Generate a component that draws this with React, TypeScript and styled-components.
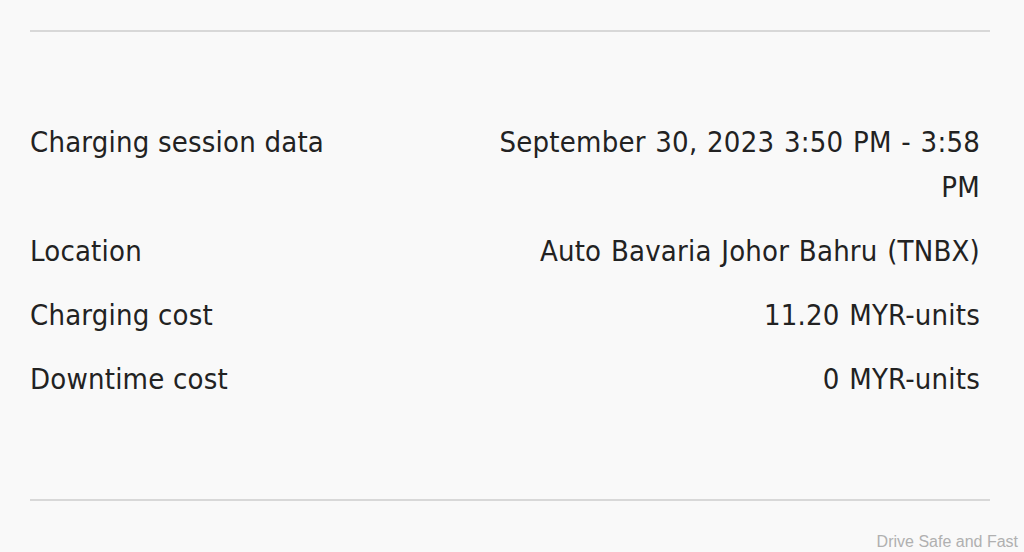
import React from "react";
import styled, { createGlobalStyle } from "styled-components";

const Global = createGlobalStyle`
  html, body { margin: 0; padding: 0; background: #f9f9f9; }
  body { width: 1024px; height: 552px; overflow: hidden; }
`;

const Page = styled.div`
  width: 1024px;
  height: 552px;
  box-sizing: border-box;
  padding: 30px 34px 0 30px;
  display: flex;
  flex-direction: column;
  background: #f9f9f9;
  font-family: "DejaVu Sans Condensed", "DejaVu Sans", sans-serif;
  color: #222;
`;

const Rule = styled.div`
  height: 2px;
  background: #d8d8d8;
`;

const List = styled.div`
  display: flex;
  flex-direction: column;
  gap: 19px;
  padding: 88px 10px 97px 0;
`;

const Row = styled.div`
  display: flex;
  justify-content: space-between;
  align-items: flex-start;
  font-size: 29px;
  line-height: 45px;
  letter-spacing: 0.2px;
`;

const Label = styled.div``;

const Value = styled.div`
  text-align: right;
  max-width: 490px;
  word-spacing: 1.2px;
`;

const Footer = styled.div`
  display: flex;
  justify-content: flex-end;
  margin-right: -28px;
  padding-top: 32px;
  font-family: "Liberation Sans", Arial, sans-serif;
  font-size: 16px;
  color: #b0b0b0;
`;

const rows = [
  ["Charging session data", "September 30, 2023 3:50 PM - 3:58 PM"],
  ["Location", "Auto Bavaria Johor Bahru (TNBX)"],
  ["Charging cost", "11.20 MYR-units"],
  ["Downtime cost", "0 MYR-units"],
];

export default function App() {
  return (
    <Page>
      <Global />
      <Rule />
      <List>
        {rows.map(([l, v]) => (
          <Row key={l}>
            <Label>{l}</Label>
            <Value>{v}</Value>
          </Row>
        ))}
      </List>
      <Rule />
      <Footer>Drive Safe and Fast</Footer>
    </Page>
  );
}
